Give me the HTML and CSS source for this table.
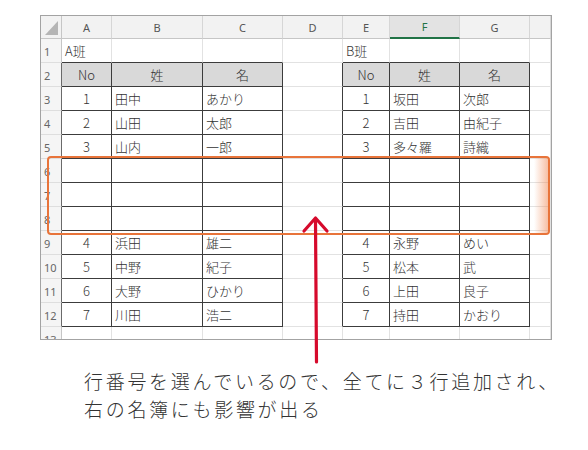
FILE: index.html
```html
<!DOCTYPE html>
<html lang="ja">
<head>
<meta charset="utf-8">
<link rel="stylesheet" href="styles.css">
</head>
<body>
<div class="page">
  <div class="sheet">
    <div class="c corner"></div><div class="c ch">A</div><div class="c ch">B</div><div class="c ch">C</div><div class="c ch">D</div><div class="c ch">E</div><div class="c ch sel">F</div><div class="c ch">G</div><div class="c ch"></div>

    <div class="c rh">1</div><div class="c tb">A班</div><div class="c tb"></div><div class="c tb"></div><div class="c"></div><div class="c tb">B班</div><div class="c tb"></div><div class="c tb"></div><div class="c"></div>

    <div class="c rh tr">2</div><div class="c t h">No</div><div class="c t h">姓</div><div class="c t h">名</div><div class="c tr"></div><div class="c t h">No</div><div class="c t h">姓</div><div class="c t h">名</div><div class="c"></div>

    <div class="c rh tr">3</div><div class="c t n">1</div><div class="c t">田中</div><div class="c t">あかり</div><div class="c tr"></div><div class="c t n">1</div><div class="c t">坂田</div><div class="c t">次郎</div><div class="c"></div>

    <div class="c rh tr">4</div><div class="c t n">2</div><div class="c t">山田</div><div class="c t">太郎</div><div class="c tr"></div><div class="c t n">2</div><div class="c t">吉田</div><div class="c t">由紀子</div><div class="c"></div>

    <div class="c rh tr">5</div><div class="c t n">3</div><div class="c t">山内</div><div class="c t">一郎</div><div class="c tr"></div><div class="c t n">3</div><div class="c t">多々羅</div><div class="c t">詩織</div><div class="c"></div>

    <div class="c rh tr">6</div><div class="c t"></div><div class="c t"></div><div class="c t"></div><div class="c tr"></div><div class="c t"></div><div class="c t"></div><div class="c t"></div><div class="c"></div>

    <div class="c rh tr">7</div><div class="c t"></div><div class="c t"></div><div class="c t"></div><div class="c tr"></div><div class="c t"></div><div class="c t"></div><div class="c t"></div><div class="c"></div>

    <div class="c rh tr">8</div><div class="c t"></div><div class="c t"></div><div class="c t"></div><div class="c tr"></div><div class="c t"></div><div class="c t"></div><div class="c t"></div><div class="c"></div>

    <div class="c rh tr">9</div><div class="c t n">4</div><div class="c t">浜田</div><div class="c t">雄二</div><div class="c tr"></div><div class="c t n">4</div><div class="c t">永野</div><div class="c t">めい</div><div class="c"></div>

    <div class="c rh tr">10</div><div class="c t n">5</div><div class="c t">中野</div><div class="c t">紀子</div><div class="c tr"></div><div class="c t n">5</div><div class="c t">松本</div><div class="c t">武</div><div class="c"></div>

    <div class="c rh tr">11</div><div class="c t n">6</div><div class="c t">大野</div><div class="c t">ひかり</div><div class="c tr"></div><div class="c t n">6</div><div class="c t">上田</div><div class="c t">良子</div><div class="c"></div>

    <div class="c rh tr">12</div><div class="c t n">7</div><div class="c t">川田</div><div class="c t">浩二</div><div class="c tr"></div><div class="c t n">7</div><div class="c t">持田</div><div class="c t">かおり</div><div class="c"></div>

    <div class="c rh">13</div><div class="c"></div><div class="c"></div><div class="c"></div><div class="c"></div><div class="c"></div><div class="c"></div><div class="c"></div><div class="c"></div>
  </div>

  <div class="hl"></div>
  <svg class="arrow" viewBox="0 0 32 160" xmlns="http://www.w3.org/2000/svg">
    <path d="M16.5 154 C16.2 110 15.8 60 15.5 12" fill="none" stroke="#d60a2c" stroke-width="3.2" stroke-linecap="round"/>
    <path d="M4 23 L15.5 10 L27 23" fill="none" stroke="#d60a2c" stroke-width="3.2" stroke-linecap="round" stroke-linejoin="round"/>
  </svg>

  <p class="note">行番号を選んでいるので、全てに３行追加され、<br>右の名簿にも影響が出る</p>
</div>
</body>
</html>
```

FILE: styles.css
```css
* {
  box-sizing: border-box;
  margin: 0;
  padding: 0;
}

body {
  background: #fff;
  font-family: "Noto Sans CJK JP", "Noto Sans", sans-serif;
}

.page {
  position: relative;
  width: 588px;
  height: 450px;
  padding: 15px 0 0 40px;
}

.sheet {
  width: 512px;
  height: 325px;
  border: 1px solid #a3a3a3;
  overflow: hidden;
  display: grid;
  grid-template-columns: 21px 50px 91px 80px 60px 47px 70px 70px 21px;
  grid-template-rows: 23px repeat(13, 24px);
  background: #fff;
}

.c {
  border-right: 1px solid #e2e2e2;
  border-bottom: 1px solid #e2e2e2;
  font-size: 13px;
  font-weight: 300;
  color: #333;
  display: flex;
  align-items: center;
  padding-left: 3px;
  white-space: nowrap;
  overflow: hidden;
}

.ch {
  background: #f2f2f2;
  border-right-color: #d6d6d6;
  border-bottom-color: #c6c6c6;
  justify-content: center;
  padding: 0;
  font-family: "Noto Sans", sans-serif;
  font-size: 11px;
  font-weight: 400;
  color: #555;
}

.ch.sel {
  background: #e3e3e3;
  color: #217346;
  border-bottom: 2px solid #217346;
}

.corner {
  position: relative;
  background: #f2f2f2;
  border-right-color: #c6c6c6;
  border-bottom-color: #c6c6c6;
}

.corner::after {
  content: "";
  position: absolute;
  right: 3px;
  bottom: 3px;
  width: 13px;
  height: 14px;
  background: #b5b5b5;
  clip-path: polygon(100% 0, 100% 100%, 0 100%);
}

.rh {
  background: #f5f5f5;
  border-right-color: #c6c6c6;
  border-bottom-color: #dedede;
  font-family: "Noto Sans", sans-serif;
  font-size: 11px;
  font-weight: 400;
  color: #666;
  padding-left: 3px;
  align-items: flex-start;
  padding-top: 5px;
}

.t {
  border-right-color: #3c3c3c;
  border-bottom-color: #3c3c3c;
}

.tb {
  border-bottom-color: #3c3c3c;
}

.tr {
  border-right-color: #6a6a6a;
}

.c.tr:not(.rh) {
  border-right-color: #3c3c3c;
}

.h {
  background: #d9d9d9;
  justify-content: center;
  padding: 0;
}

.n {
  justify-content: center;
  padding: 0;
}

.hl {
  position: absolute;
  left: 47px;
  top: 156px;
  width: 503px;
  height: 79px;
  border: 2.5px solid #e8743a;
  border-radius: 4px;
  overflow: hidden;
}

.hl::after {
  content: "";
  position: absolute;
  right: 0;
  top: 0;
  bottom: 0;
  width: 14px;
  background: linear-gradient(to right, rgba(245, 170, 130, 0), rgba(240, 140, 90, 0.55));
}

.arrow {
  position: absolute;
  left: 300px;
  top: 208px;
  width: 32px;
  height: 160px;
}

.note {
  margin-top: 27px;
  padding-left: 44px;
  font-size: 19px;
  font-weight: 300;
  line-height: 28px;
  letter-spacing: 2.7px;
  color: #333;
}
```
